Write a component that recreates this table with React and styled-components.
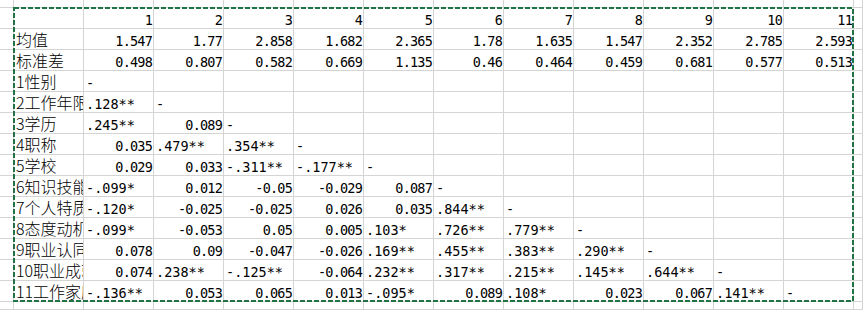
import styled, { createGlobalStyle } from 'styled-components';

const GlobalStyle = createGlobalStyle`
  html, body {
    margin: 0;
    padding: 0;
    background: #fff;
    overflow: hidden;
  }
`;

const COLS = 12;

// first entry is the label column, numbers are right aligned, strings left aligned
const rows = [
  ['', 1, 2, 3, 4, 5, 6, 7, 8, 9, 10, 11],
  ['均值', 1.547, 1.77, 2.858, 1.682, 2.365, 1.78, 1.635, 1.547, 2.352, 2.785, 2.593],
  ['标准差', 0.498, 0.807, 0.582, 0.669, 1.135, 0.46, 0.464, 0.459, 0.681, 0.577, 0.513],
  ['1性别', '-'],
  ['2工作年限', '.128**', '-'],
  ['3学历', '.245**', 0.089, '-'],
  ['4职称', 0.035, '.479**', '.354**', '-'],
  ['5学校', 0.029, 0.033, '-.311**', '-.177**', '-'],
  ['6知识技能', '-.099*', 0.012, -0.05, -0.029, 0.087, '-'],
  ['7个人特质', '-.120*', -0.025, -0.025, 0.026, 0.035, '.844**', '-'],
  ['8态度动机', '-.099*', -0.053, 0.05, 0.005, '.103*', '.726**', '.779**', '-'],
  ['9职业认同', 0.078, 0.09, -0.047, -0.026, '.169**', '.455**', '.383**', '.290**', '-'],
  ['10职业成就', 0.074, '.238**', '-.125**', -0.064, '.232**', '.317**', '.215**', '.145**', '.644**', '-'],
  ['11工作家庭冲突', '-.136**', 0.053, 0.065, 0.013, '-.095*', 0.089, '.108*', 0.023, 0.067, '.141**', '-'],
];

const Sheet = styled.div`
  position: relative;
  display: grid;
  grid-template-columns: 14px repeat(${COLS}, 70px) 1fr;
  grid-template-rows: 8px repeat(${rows.length}, 21px) 1fr;
  width: 863px;
  height: 310px;
  background: #fff;
`;

const fonts = {
  label: '"Noto Sans CJK SC", "Noto Sans", sans-serif',
  mono: '"DejaVu Sans Mono", "Liberation Mono", monospace',
};

const Cell = styled.div`
  box-sizing: border-box;
  border-right: 1px solid #d4d4d4;
  border-bottom: 1px solid #d4d4d4;
  overflow: hidden;
  white-space: nowrap;
  display: flex;
  align-items: flex-end;
  justify-content: ${(p) => (p.$kind === 'num' ? 'flex-end' : 'flex-start')};
  padding: 0 1px 1px 2px;
  color: #000;
  line-height: 1;
  font-family: ${fonts.mono};
  font-size: 13.5px;
  letter-spacing: ${(p) => (p.$kind === 'num' ? '-0.8px' : '0')};

  ${(p) =>
    p.$kind === 'label' &&
    `
    font-family: ${fonts.label};
    font-size: 16px;
    font-weight: 300;
    padding: 0 0 2px 2px;
  `}
`;

const Marquee = styled.svg`
  position: absolute;
  left: 0;
  top: 0;
  pointer-events: none;
`;

function kindOf(v) {
  return typeof v === 'number' ? 'num' : 'text';
}

export default function App() {
  const blankRow = (key) =>
    Array.from({ length: COLS + 2 }, (_, i) => <Cell key={key + i} />);

  const cells = [];
  rows.forEach((row, r) => {
    cells.push(<Cell key={'l' + r} />);
    cells.push(
      <Cell key={'a' + r} $kind="label">
        {row[0]}
      </Cell>
    );
    for (let c = 1; c < COLS; c++) {
      const v = row[c];
      cells.push(
        <Cell key={r + '-' + c} $kind={v === undefined ? 'text' : kindOf(v)}>
          {v === undefined ? '' : String(v)}
        </Cell>
      );
    }
    cells.push(<Cell key={'r' + r} />);
  });

  return (
    <>
      <GlobalStyle />
      <Sheet>
        {blankRow('top')}
        {cells}
        {blankRow('bottom')}
        <Marquee width="863" height="310">
          <rect
            x="14"
            y="8"
            width="839"
            height="293"
            fill="none"
            stroke="#217346"
            strokeWidth="2"
            strokeDasharray="5 2"
          />
        </Marquee>
      </Sheet>
    </>
  );
}
